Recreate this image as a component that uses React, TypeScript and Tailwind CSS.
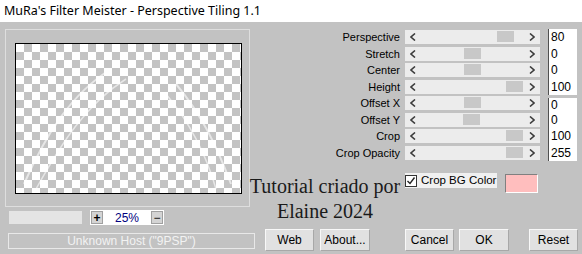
import React from "react";

const rows = [
  { label: "Perspective", value: "80", thumb: 92 },
  { label: "Stretch", value: "0", thumb: 59 },
  { label: "Center", value: "0", thumb: 59 },
  { label: "Height", value: "100", thumb: 101 },
  { label: "Offset X", value: "0", thumb: 59, split: true },
  { label: "Offset Y", value: "0", thumb: 58 },
  { label: "Crop", value: "100", thumb: 101 },
  { label: "Crop Opacity", value: "255", thumb: 101 },
];

function Chevron({ dir }: { dir: "left" | "right" }) {
  return (
    <svg width="6" height="8" viewBox="0 0 6 8" className="shrink-0">
      <polyline
        points={dir === "left" ? "5,0.5 1,4 5,7.5" : "1,0.5 5,4 1,7.5"}
        fill="none"
        stroke="#3c3c3c"
        strokeWidth="1.6"
      />
    </svg>
  );
}

function Slider({ thumb }: { thumb: number }) {
  return (
    <div className="relative w-[135px] h-[14px] bg-[#ececec] flex items-center justify-between px-[5px]">
      <Chevron dir="left" />
      <div className="absolute top-[1px] h-[11px] w-[17px] bg-[#c8c8c8]" style={{ left: thumb }} />
      <Chevron dir="right" />
    </div>
  );
}

function Btn({ label, w }: { label: string; w: string }) {
  return (
    <div
      className={`${w} h-[22px] flex items-center justify-center bg-[#e1e1e1] border border-t-[#f8f8f8] border-l-[#f8f8f8] border-b-[#a8a8a8] border-r-[#a8a8a8] text-[12px] text-black`}
    >
      {label}
    </div>
  );
}

export default function App() {
  return (
    <div className="w-[582px] h-[254px] bg-[#c2c2c2] flex flex-col overflow-hidden font-['Liberation_Sans',Arial,sans-serif] relative">
      {/* title bar */}
      <div className="h-[22px] bg-white flex items-center pl-[4px] text-[12.5px] text-black font-['Noto_Sans',sans-serif]">
        MuRa's Filter Meister - Perspective Tiling 1.1
      </div>

      <div className="flex flex-1">
        {/* left column */}
        <div className="w-[258px] flex flex-col">
          <div className="ml-[5px] mt-[7px] w-[245px] h-[178px] border border-[#dedede] pl-[9px] pt-[13px]">
            <div className="w-[227px] h-[151px] border border-black bg-[conic-gradient(#c3c3c3_25%,#fff_0_50%,#c3c3c3_0_75%,#fff_0)] bg-[length:16px_16px] relative overflow-hidden">
              <svg width="225" height="149" className="absolute inset-0 opacity-60">
                <path d="M8 140 C 30 90, 55 50, 95 25" stroke="#fff" strokeWidth="2" fill="none" />
                <path d="M20 145 C 45 100, 70 60, 110 35" stroke="#fff" strokeWidth="1.5" fill="none" />
                <path d="M215 140 C 200 100, 185 70, 160 40" stroke="#fff" strokeWidth="2" fill="none" />
                <path d="M200 145 C 190 110, 175 80, 150 50" stroke="#fff" strokeWidth="1.5" fill="none" />
              </svg>
            </div>
          </div>

          <div className="flex items-center mt-[3px] h-[15px]">
            <div className="ml-[9px] w-[73px] h-[13px] bg-[#e4e4e4]" />
            <div className="ml-[8px] w-[74px] h-[15px] bg-white flex items-center justify-between px-[1px]">
              <div className="w-[12px] h-[13px] bg-[#d4d4d4] border border-[#a0a0a0] flex items-center justify-center text-[12px] font-bold leading-none">
                +
              </div>
              <span className="text-[12px] text-[#000080]">25%</span>
              <div className="w-[12px] h-[13px] bg-[#d4d4d4] border border-[#a0a0a0] flex items-center justify-center text-[12px] leading-none">
                −
              </div>
            </div>
          </div>

          <div className="ml-[8px] mt-[8px] w-[247px] h-[16px] border border-[#e8e8e8] flex items-center justify-center text-[12px] text-[#f2f2f2]">
            Unknown Host ("9PSP")
          </div>
        </div>

        {/* right column */}
        <div className="flex-1 flex flex-col pt-[7px]">
          {rows.map((r) => (
            <div key={r.label} className="flex items-center h-[16.5px] text-[11px] text-black">
              <div className="w-[142px] text-right">{r.label}</div>
              <div className="ml-[5px]">
                <Slider thumb={r.thumb} />
              </div>
              <div
                className={`ml-[8px] w-[29px] bg-white border-l border-[#505050] pl-[2px] text-[12px] flex items-center ${
                  r.split ? "self-end h-[14px]" : "h-full"
                }`}
              >
                {r.value}
              </div>
            </div>
          ))}

          <div className="flex items-start mt-[12px] h-[20px]">
            <div className="ml-[147px] flex items-center h-[15px] bg-[#f0f0f0] w-[92px]">
              <div className="shrink-0 w-[12px] h-[12px] bg-white border border-[#333] flex items-center justify-center">
                <svg width="10" height="10" viewBox="0 0 10 10">
                  <polyline points="1.5,5 4,7.5 8.5,1.5" fill="none" stroke="#222" strokeWidth="1.4" />
                </svg>
              </div>
              <span className="ml-[4px] text-[11.5px] text-black whitespace-nowrap">Crop BG Color</span>
            </div>
            <div className="ml-[8px] mt-[1px] w-[33px] h-[19px] bg-[#ffbebe] border border-t-[#808080] border-l-[#808080] border-b-white border-r-white" />
          </div>

          <div className="flex items-center mt-[36px]">
            <div className="ml-[7px]">
              <Btn label="Web" w="w-[49px]" />
            </div>
            <div className="ml-[6px]">
              <Btn label="About..." w="w-[50px]" />
            </div>
            <div className="ml-[35px]">
              <Btn label="Cancel" w="w-[49px]" />
            </div>
            <div className="ml-[5px]">
              <Btn label="OK" w="w-[50px]" />
            </div>
            <div className="ml-[20px]">
              <Btn label="Reset" w="w-[49px]" />
            </div>
          </div>
        </div>
      </div>

      {/* tutorial watermark */}
      <div className="absolute left-[246px] top-[174px] w-[158px] text-center text-[20px] leading-[25px] text-[#1a1a1a] font-['Liberation_Serif',serif]">
        Tutorial criado por
        <br />
        Elaine 2024
      </div>
    </div>
  );
}
